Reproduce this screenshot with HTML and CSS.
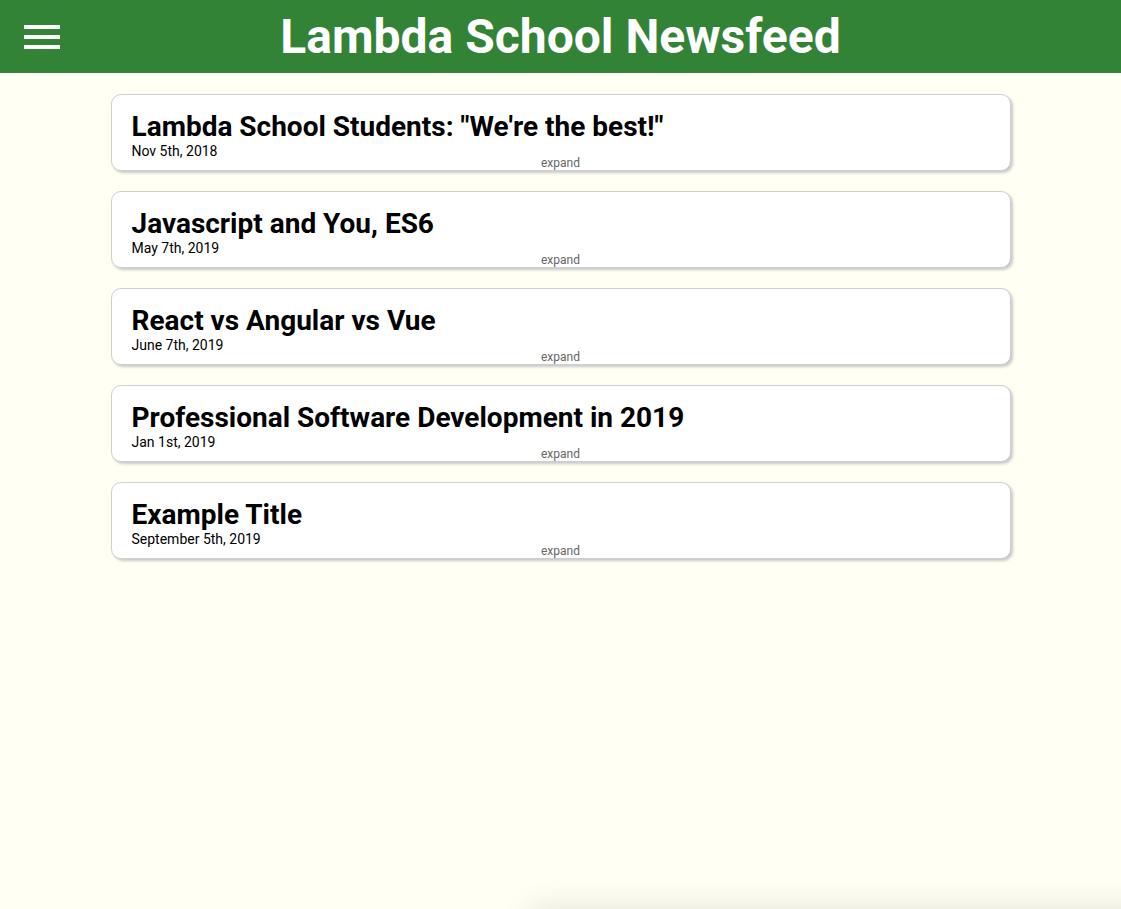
FILE: index.html
```html
<!DOCTYPE html>
<html>
<head>
<meta charset="utf-8">
<link rel="stylesheet" href="styles.css">
</head>
<body>
<header class="header">
  <div class="menu-button">
    <span class="bar"></span><span class="bar"></span><span class="bar"></span>
  </div>
  <h1 class="title">Lambda School Newsfeed</h1>
</header>
<main class="articles">
  <div class="article">
    <h2 class="article-title">Lambda School Students: "We're the best!"</h2>
    <p class="date">Nov 5th, 2018</p>
    <span class="expand">expand</span>
  </div>
  <div class="article">
    <h2 class="article-title">Javascript and You, ES6</h2>
    <p class="date">May 7th, 2019</p>
    <span class="expand">expand</span>
  </div>
  <div class="article">
    <h2 class="article-title">React vs Angular vs Vue</h2>
    <p class="date">June 7th, 2019</p>
    <span class="expand">expand</span>
  </div>
  <div class="article">
    <h2 class="article-title">Professional Software Development in 2019</h2>
    <p class="date">Jan 1st, 2019</p>
    <span class="expand">expand</span>
  </div>
  <div class="article">
    <h2 class="article-title">Example Title</h2>
    <p class="date">September 5th, 2019</p>
    <span class="expand">expand</span>
  </div>
</main>
<div class="menu"></div>
</body>
</html>
```
FILE: styles.css
```css
html, body {
  margin: 0;
  padding: 0;
}
body {
  background: #fffff4;
  font-family: Roboto, "Liberation Sans", sans-serif;
  overflow: hidden;
  height: 909px;
}
.header {
  height: 73px;
  background: #338336;
  display: flex;
  align-items: center;
  justify-content: center;
  position: relative;
}
.menu-button {
  position: absolute;
  left: 24px;
  top: 25px;
  display: flex;
  flex-direction: column;
  gap: 6px;
}
.bar {
  display: block;
  width: 36px;
  height: 4px;
  background: #fff;
}
.title {
  margin: 0;
  color: #fff;
  font-size: 48px;
  font-weight: 700;
}
.articles {
  display: flex;
  flex-direction: column;
  align-items: center;
  gap: 20px;
  padding-top: 21px;
}
.article {
  width: 858px;
  height: 75px;
  padding: 0 20px;
  background: #fff;
  border: 1px solid #cfcfcf;
  border-radius: 10px;
  box-shadow: 2px 2px 3px #c8c8c8;
  position: relative;
  box-sizing: content-box;
}
.article-title {
  margin: 15px 0 0;
  font-size: 28px;
  font-weight: 700;
  line-height: 33px;
  color: #000;
}
.date {
  margin: 0;
  font-size: 14px;
  line-height: 16px;
  color: #000;
}
.expand {
  position: absolute;
  bottom: 0;
  left: 50%;
  transform: translateX(-50%);
  font-size: 12px;
  line-height: 14px;
  color: #666;
}
.menu {
  position: fixed;
  left: 530px;
  top: 909px;
  width: 700px;
  height: 400px;
  background: #fffff4;
  box-shadow: 0 0 30px rgba(0,0,0,0.12);
}
```
